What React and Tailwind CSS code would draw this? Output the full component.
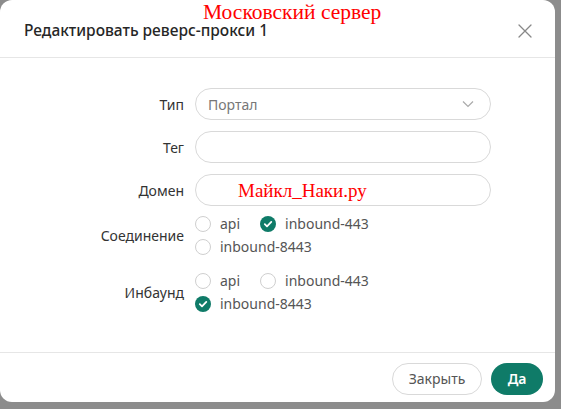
import React from 'react'

const CONNECTIONS = [
  { key: 'api', label: 'api', checked: false },
  { key: 'in443', label: 'inbound-443', checked: true },
  { key: 'in8443', label: 'inbound-8443', checked: false },
]

const INBOUNDS = [
  { key: 'api', label: 'api', checked: false },
  { key: 'in443', label: 'inbound-443', checked: false },
  { key: 'in8443', label: 'inbound-8443', checked: true },
]

function Check({ checked, label }) {
  return (
    <label className="flex items-center gap-[9px] h-[23px]">
      {checked ? (
        <span className="w-4 h-4 rounded-full bg-[#0f7b68] flex items-center justify-center">
          <svg width="10" height="10" viewBox="0 0 10 10" fill="none">
            <path d="M1.8 5.2 4 7.3 8.3 2.9" stroke="white" strokeWidth="1.8" strokeLinecap="round" strokeLinejoin="round" />
          </svg>
        </span>
      ) : (
        <span className="w-4 h-4 rounded-full border border-[#cfcfcf] bg-white" />
      )}
      <span className="text-[14px] text-[#555]">{label}</span>
    </label>
  )
}

function Row({ label, children }) {
  return (
    <div className="grid grid-cols-[184px_1fr] gap-[11px] items-center">
      <span className="text-right text-[14px] text-[#333]">{label}</span>
      {children}
    </div>
  )
}

function CheckGroup({ items }) {
  return (
    <div className="flex flex-wrap w-[200px] gap-x-[20px]">
      {items.map(it => <Check key={it.key} checked={it.checked} label={it.label} />)}
    </div>
  )
}

export default function App() {
  return (
    <div className="w-[561px] h-[409px] bg-[#8c8c8c] overflow-hidden" style={{ fontFamily: '"Noto Sans", "Open Sans", sans-serif' }}>
      <div className="relative w-[555px] h-[402px] bg-white rounded-[12px] flex flex-col">
        {/* Header */}
        <div className="h-[58px] flex items-center justify-between pl-6 pr-[22px] border-b border-[#e6e6e6]">
          <span className="text-[15.5px] font-medium text-[#262626] pt-1">Редактировать реверс-прокси 1</span>
          <button className="text-[#888] pt-1" aria-label="Close">
            <svg width="16" height="16" viewBox="0 0 16 16" fill="none">
              <path d="M2 2 14 14M14 2 2 14" stroke="currentColor" strokeWidth="1.3" strokeLinecap="round" />
            </svg>
          </button>
        </div>
        <span
          className="absolute left-[203px] top-0 text-[21.5px] leading-[24px] text-[#ff0000]"
          style={{ fontFamily: '"Liberation Serif", serif' }}
        >
          Московский сервер
        </span>

        {/* Form */}
        <div className="flex-1 flex flex-col pt-[30px] gap-[11px] pr-[64px]">
          <Row label="Тип">
            <div className="h-8 rounded-full border border-[#d9d9d9] flex items-center justify-between pl-3 pr-4">
              <span className="text-[14px] text-[#777]">Портал</span>
              <svg width="12" height="8" viewBox="0 0 12 8" fill="none">
                <path d="M1 1.5 6 6.5 11 1.5" stroke="#aaa" strokeWidth="1.2" />
              </svg>
            </div>
          </Row>
          <Row label="Тег">
            <div className="h-8 rounded-full border border-[#d9d9d9]" />
          </Row>
          <Row label="Домен">
            <div className="h-8 rounded-full border border-[#d9d9d9] flex items-center pl-[42px]">
              <span
                className="text-[19px] leading-none text-[#ff0000]"
                style={{ fontFamily: '"Liberation Serif", serif' }}
              >
                Майкл_Наки.ру
              </span>
            </div>
          </Row>
          <div className="mt-[-5px] flex flex-col gap-[11px]">
            <Row label="Соединение">
              <CheckGroup items={CONNECTIONS} />
            </Row>
            <Row label="Инбаунд">
              <CheckGroup items={INBOUNDS} />
            </Row>
          </div>
        </div>

        {/* Footer */}
        <div className="h-[50px] border-t border-[#e6e6e6] flex items-center justify-end gap-[9px] pr-3 pt-[2px]">
          <button className="h-8 w-[90px] rounded-full border border-[#d9d9d9] text-[14px] text-[#555]">Закрыть</button>
          <button className="h-8 w-[52px] rounded-full bg-[#0f7b68] text-[14px] font-semibold text-white">Да</button>
        </div>
      </div>
    </div>
  )
}
